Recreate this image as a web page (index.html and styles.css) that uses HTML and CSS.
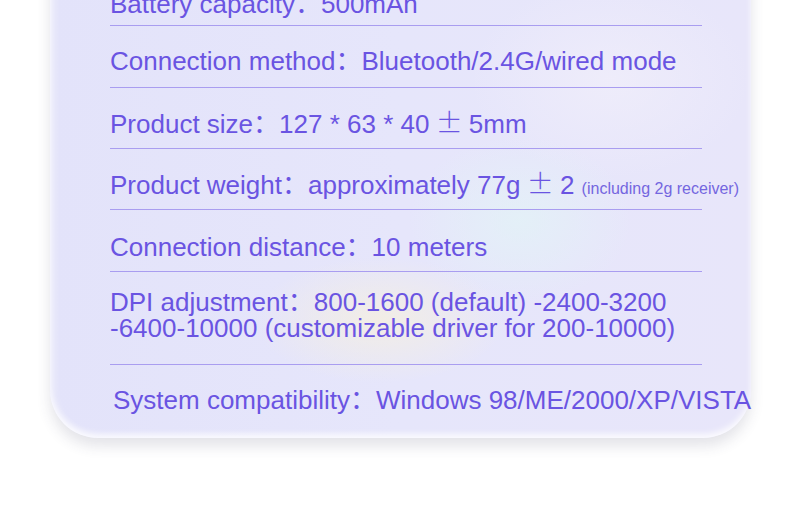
FILE: index.html
```html
<!DOCTYPE html>
<html>
<head>
<meta charset="utf-8">
<link rel="stylesheet" href="styles.css">
</head>
<body>
<div class="page">
  <div class="card">
    <div class="row row-first">Battery capacity：500mAh</div>
    <div class="row">Connection method：Bluetooth/2.4G/wired mode</div>
    <div class="row row-tight">Product size：127 * 63 * 40 <span class="pm">±</span> 5mm</div>
    <div class="row row-tight">Product weight：approximately 77g <span class="pm">±</span> 2 <span class="note">(including 2g receiver)</span></div>
    <div class="row row-shift">Connection distance：10 meters</div>
    <div class="row row-double">DPI adjustment：800-1600 (default) -2400-3200<br>-6400-10000 (customizable driver for 200-10000)</div>
    <div class="row row-last">System compatibility：Windows 98/ME/2000/XP/VISTA</div>
  </div>
</div>
</body>
</html>
```
FILE: styles.css
```css
html, body {
  margin: 0;
  padding: 0;
  background: #ffffff;
  overflow: hidden;
}
.page {
  width: 800px;
  height: 507px;
  overflow: hidden;
}
.card {
  width: 701px;
  margin: -40px 0 0 50px;
  border-radius: 0 0 48px 48px;
  background:
    radial-gradient(ellipse 180px 90px at 330px 360px, rgba(246, 240, 222, 0.75), rgba(246, 240, 222, 0) 70%),
    radial-gradient(ellipse 160px 120px at 470px 260px, rgba(226, 244, 246, 0.7), rgba(226, 244, 246, 0) 70%),
    radial-gradient(ellipse 200px 140px at 560px 120px, rgba(240, 238, 250, 0.8), rgba(240, 238, 250, 0) 70%),
    linear-gradient(90deg, #e3e3fa 0%, #e6e6fb 50%, #e8e6fa 100%);
  box-shadow:
    inset 0 -4px 6px rgba(255, 255, 255, 0.75),
    inset 3px 0 8px rgba(255, 255, 255, 0.5),
    0 8px 14px rgba(60, 60, 90, 0.14);
  padding: 0 0 25px 61px;
  box-sizing: border-box;
  font-family: "Liberation Sans", Arial, "Noto Sans CJK SC", sans-serif;
  font-size: 26px;
  line-height: 26px;
  color: #6a54e2;
}
.row {
  width: 592px;
  padding: 22px 0 0 0;
  margin-left: -1px;
  border-bottom: 1px solid #a99df0;
  white-space: nowrap;
  box-sizing: border-box;
  height: 62px;
}
.row-first {
  padding-top: 31px;
  height: 66px;
}
.row-tight {
  height: 61px;
  padding-top: 23px;
}
.row-shift {
  padding-top: 24px;
}
.row-double {
  padding-top: 17px;
  height: 93px;
}
.row-last {
  border-bottom: none;
  padding-top: 22px;
  height: auto;
  margin-left: 2px;
}
.pm {
  font-family: "Noto Sans CJK SC", sans-serif;
  font-weight: 300;
  font-size: 27px;
  line-height: 16px;
  margin: 0 -1px;
}
.note {
  font-size: 16px;
  color: #7466e0;
}
```
